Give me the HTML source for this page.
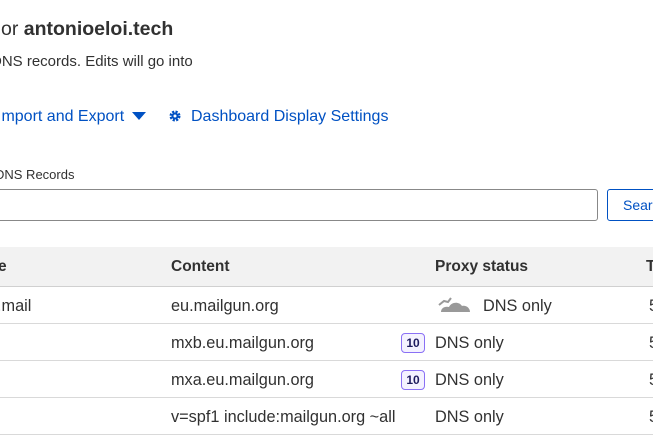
<!DOCTYPE html>
<html><head><style>
body{margin:0;width:653px;height:435px;overflow:hidden;background:#fff;font-family:"Liberation Sans",sans-serif;color:#313131;position:relative}
.a{position:absolute;white-space:nowrap}
.l{color:#0051c3;font-size:16px}
.r{font-size:16.3px}
.row{position:absolute;left:0;width:653px;border-bottom:1px solid #d9d9d9}
.b{position:absolute;left:401px;width:24px;height:20px;border:1px solid #8a70f5;border-radius:4px;background:#f4f2ff;color:#1d1b5e;font-size:12px;font-weight:bold;text-align:center;line-height:18px;box-sizing:border-box}
</style></head><body>
<div class="a" style="left:1px;top:18px;font-size:19.5px">or <b>antonioeloi.tech</b></div>
<div class="a" style="left:-9px;top:53px;font-size:15px">DNS records. Edits will go into</div>
<div class="a l" style="left:-3px;top:108px">Import and Export</div>
<svg class="a" style="left:132px;top:112px" width="14" height="8"><path d="M0 0H14L7 8Z" fill="#0051c3"/></svg>
<svg class="a" style="left:169px;top:110px" width="12" height="12" viewBox="0 0 12 12"><circle cx="6" cy="6" r="4" fill="none" stroke="#0051c3" stroke-width="3" stroke-dasharray="2 1.2"/><circle cx="6" cy="6" r="3.5" fill="#0051c3"/><circle cx="6" cy="6" r="1.5" fill="#fff"/></svg>
<div class="a l" style="left:191px;top:108px">Dashboard Display Settings</div>
<div class="a" style="left:-5px;top:167px;font-size:13px">DNS Records</div>
<div class="a" style="left:-5px;top:189px;width:603px;height:32px;border:1px solid #888;border-radius:3px;box-sizing:border-box"></div>
<div class="a" style="left:607px;top:189px;width:60px;height:32px;border:1px solid #0051c3;border-radius:3px;box-sizing:border-box;color:#0051c3;font-size:14px;line-height:30px;padding-left:15px">Search</div>
<div class="row" style="top:247px;height:39px;background:#f2f2f2;border-color:#d0d0d0"></div>
<div class="a" style="left:-2px;top:258px;font-size:15.5px;font-weight:bold">e</div>
<div class="a" style="left:171px;top:258px;font-size:15.5px;font-weight:bold">Content</div>
<div class="a" style="left:435px;top:258px;font-size:15.5px;font-weight:bold">Proxy status</div>
<div class="a" style="left:646px;top:258px;font-size:15.5px;font-weight:bold">T</div>
<div class="row" style="top:287px;height:36px"></div>
<div class="row" style="top:324px;height:36px"></div>
<div class="row" style="top:361px;height:36px"></div>
<div class="row" style="top:398px;height:36px"></div>
<div class="a r" style="left:-3px;top:297px">.mail</div>
<div class="a r" style="left:171px;top:297px">eu.mailgun.org</div>
<svg class="a" style="left:437px;top:293px" width="34" height="20" viewBox="0 0 34 20"><path d="M4 19 C4 15 8 13 12 14 C14 9 22 8 25 13 C29 12 33 15 33 19Z" fill="#999"/><path d="M2 12 L7 8 L11 9 L14 5" stroke="#999" stroke-width="2" fill="none"/></svg>
<div class="a r" style="left:483px;top:297px">DNS only</div>
<div class="a r" style="left:171px;top:334px">mxb.eu.mailgun.org</div>
<div class="b" style="top:333px">10</div>
<div class="a r" style="left:435px;top:334px">DNS only</div>
<div class="a r" style="left:171px;top:371px">mxa.eu.mailgun.org</div>
<div class="b" style="top:370px">10</div>
<div class="a r" style="left:435px;top:371px">DNS only</div>
<div class="a r" style="left:171px;top:408px">v=spf1 include:mailgun.org ~all</div>
<div class="a r" style="left:435px;top:408px">DNS only</div>
<div class="a r" style="left:649px;top:297px">5</div>
<div class="a r" style="left:649px;top:334px">5</div>
<div class="a r" style="left:649px;top:371px">5</div>
<div class="a r" style="left:649px;top:408px">5</div>
</body></html>
